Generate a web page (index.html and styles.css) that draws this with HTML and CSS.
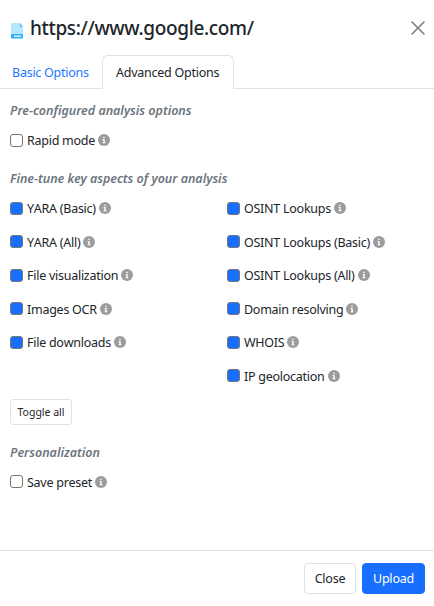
FILE: index.html
```
<!DOCTYPE html>
<html lang="en">
<head>
	<meta charset="utf-8">
	<title>Upload options</title>
	<link rel="stylesheet" href="styles.css">
</head>

<body>
<svg class="sprite" xmlns="http://www.w3.org/2000/svg">
	<symbol id="info" viewBox="0 0 12 12">
		<circle cx="6" cy="6" r="6" fill="#9c9c9c"/>
		<path d="M5.2 2.7h1.5v1.4H5.2zM4.6 5.1h2.1v3.1h.7v1H4.6v-1h.7V6.1h-.7z" fill="#fff"/>
	</symbol>
</svg>

<div class="modal">
	<div class="modal-header">
		<svg class="file-icon" viewBox="0 0 13 16">
			<path d="M1 0h8.5L12 3.5V11H0V1a1 1 0 0 1 1-1z" fill="#b5e5ff"/>
			<path d="M9 0l3 4H9z" fill="#5fc0f5"/>
			<path d="M0 11h12v4a.6.6 0 0 1-.6.6H.6A.6.6 0 0 1 0 15z" fill="#2fb2f8"/>
			<path d="M3 12.6h7.5l-1 1.5H3z" fill="#d5efff"/>
		</svg>
		<h5 class="modal-title">https://www.google.com/</h5>
		<svg class="btn-close" viewBox="0 0 14 14">
			<path d="M1 1l12 12M13 1L1 13" stroke="#7f7f7f" stroke-width="1.6" stroke-linecap="round"/>
		</svg>
	</div>

	<ul class="nav-tabs">
		<li><a class="nav-link" href="#">Basic Options</a></li>
		<li><a class="nav-link active" href="#">Advanced Options</a></li>
	</ul>

	<div class="modal-body">
		<h6 class="section">Pre-configured analysis options</h6>
		<label class="check"><input type="checkbox"><span>Rapid mode</span><svg class="info"><use href="#info"/></svg></label>

		<h6 class="section">Fine-tune key aspects of your analysis</h6>
		<div class="columns">
			<div>
				<label class="check"><input type="checkbox" checked><span>YARA (Basic)</span><svg class="info"><use href="#info"/></svg></label>
				<label class="check"><input type="checkbox" checked><span>YARA (All)</span><svg class="info"><use href="#info"/></svg></label>
				<label class="check"><input type="checkbox" checked><span>File visualization</span><svg class="info"><use href="#info"/></svg></label>
				<label class="check"><input type="checkbox" checked><span>Images OCR</span><svg class="info"><use href="#info"/></svg></label>
				<label class="check"><input type="checkbox" checked><span>File downloads</span><svg class="info"><use href="#info"/></svg></label>
			</div>
			<div>
				<label class="check"><input type="checkbox" checked><span>OSINT Lookups</span><svg class="info"><use href="#info"/></svg></label>
				<label class="check"><input type="checkbox" checked><span>OSINT Lookups (Basic)</span><svg class="info"><use href="#info"/></svg></label>
				<label class="check"><input type="checkbox" checked><span>OSINT Lookups (All)</span><svg class="info"><use href="#info"/></svg></label>
				<label class="check"><input type="checkbox" checked><span>Domain resolving</span><svg class="info"><use href="#info"/></svg></label>
				<label class="check"><input type="checkbox" checked><span>WHOIS</span><svg class="info"><use href="#info"/></svg></label>
				<label class="check"><input type="checkbox" checked><span>IP geolocation</span><svg class="info"><use href="#info"/></svg></label>
			</div>
		</div>
		<button class="btn btn-sm" type="button">Toggle all</button>

		<h6 class="section personal">Personalization</h6>
		<label class="check"><input type="checkbox"><span>Save preset</span><svg class="info"><use href="#info"/></svg></label>
	</div>

	<div class="modal-footer">
		<button class="btn" type="button">Close</button>
		<button class="btn btn-primary" type="button">Upload</button>
	</div>
</div>
</body>
</html>
```
FILE: styles.css
```
*{box-sizing:border-box;}
body{margin:0;background:#fff;color:#212529;font-family:"Noto Sans","Open Sans",sans-serif;font-size:12.5px;line-height:20px;}
.sprite{display:none;}

.modal{display:flex;flex-direction:column;height:606px;overflow:hidden;white-space:nowrap;}

.modal-header{display:flex;align-items:center;height:55px;padding:0 9px 0 11px;}
.file-icon{width:13px;height:16px;margin-top:6px;}
.modal-title{flex:1;margin:0 0 0 6px;font-size:19px;font-weight:500;line-height:28px;letter-spacing:-.36px;}
.btn-close{width:14px;height:14px;}

.nav-tabs{display:flex;height:34px;margin:0;padding:0;list-style:none;border-bottom:1px solid #dee2e6;}
.nav-link{display:block;width:102px;height:34px;padding:7px 0 0 11px;border:1px solid transparent;border-bottom:0;color:#2478ff;text-decoration:none;letter-spacing:-.25px;}
.nav-link.active{width:132px;padding-left:13px;color:#212529;background:#fff;border-color:#dee2e6;border-radius:6px 6px 0 0;}

.modal-body{flex:1;padding:12px 10px 0;}
.section{margin:0 0 9px;font-size:12.5px;line-height:20px;font-weight:600;font-style:italic;color:#6c757d;letter-spacing:-.01px;}
.check{display:flex;align-items:center;height:20px;margin-bottom:13.6px;letter-spacing:-.26px;font-kerning:none;}
.check input{appearance:none;width:13px;height:13px;margin:0 4px 0 0;background:#fff;border:1px solid #767676;border-radius:3px;}
.check input:checked{background:#186fff;}
.check span{padding-top:2px;}
.info{width:12px;height:12px;margin-left:3px;}
.columns{display:grid;grid-template-columns:217px 1fr;margin-bottom:-1px;}
.check + .section{margin-top:19px;}

.btn{width:52px;height:31px;padding:0;font-family:inherit;font-size:12.5px;color:#212529;background:#fff;border:1px solid #dee2e6;border-radius:4px;letter-spacing:-.2px;}
.btn-sm{display:block;width:62px;height:26px;font-size:10.5px;border-radius:3px;letter-spacing:0;}
.section.personal{margin-top:18px;}
.btn-primary{width:63px;color:#fff;background:#186fff;border-color:#186fff;}

.modal-footer{display:flex;justify-content:flex-end;gap:6px;height:56px;padding:12px 9px 0;border-top:1px solid #dee2e6;}
```
